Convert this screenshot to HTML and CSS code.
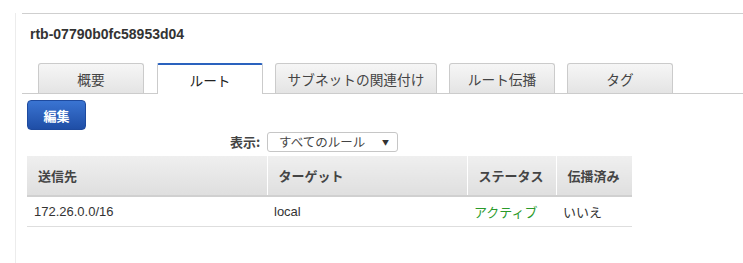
FILE: index.html
```html
<!DOCTYPE html>
<html lang="ja">
<head>
<meta charset="utf-8">
<link rel="stylesheet" href="styles.css">
</head>
<body>
<div class="page">
  <div class="panel">
    <div class="title">rtb-07790b0fc58953d04</div>
    <div class="tabs">
      <div class="tab">概要</div>
      <div class="tab active">ルート</div>
      <div class="tab wide">サブネットの関連付け</div>
      <div class="tab">ルート伝播</div>
      <div class="tab">タグ</div>
    </div>
    <div class="content">
      <button class="btn">編集</button>
      <div class="filter">
        <span class="label">表示:</span>
        <div class="select"><span>すべてのルール</span><span class="arrow">▼</span></div>
      </div>
      <table class="grid">
        <thead>
          <tr>
            <th class="c1">送信先</th>
            <th class="c2">ターゲット</th>
            <th class="c3">ステータス</th>
            <th class="c4">伝播済み</th>
          </tr>
        </thead>
        <tbody>
          <tr>
            <td>172.26.0.0/16</td>
            <td>local</td>
            <td class="ok">アクティブ</td>
            <td>いいえ</td>
          </tr>
        </tbody>
      </table>
    </div>
  </div>
</div>
</body>
</html>
```

FILE: styles.css
```css
html, body {
  margin: 0;
  padding: 0;
  background: #fff;
}
body {
  font-family: "Liberation Sans", Arial, "Noto Sans CJK JP", sans-serif;
  color: #333;
  font-size: 13px;
}
.page {
  margin-left: 15px;
  border-left: 1px solid #ececec;
  padding-left: 6px;
  min-height: 263px;
  box-sizing: border-box;
}
.panel {
  margin-top: 13px;
  border-top: 1px solid #cfcfcf;
}
.title {
  font-size: 14px;
  font-weight: bold;
  color: #333;
  padding: 12px 0 0 8px;
  height: 49px;
  line-height: 16px;
  box-sizing: border-box;
}
.tabs {
  display: flex;
  gap: 12px;
  padding-left: 16px;
  border-bottom: 1px solid #cccccc;
  height: 30px;
}
.tab {
  width: 106px;
  height: 30px;
  box-sizing: border-box;
  border: 1px solid #cbcbcb;
  border-bottom: none;
  border-radius: 3px 3px 0 0;
  background: linear-gradient(#f6f6f6, #e4e4e4);
  font-family: "Noto Sans CJK JP", sans-serif;
  font-size: 13.7px;
  color: #444;
  display: flex;
  align-items: center;
  justify-content: center;
  padding-top: 1px;
}
.tab.wide {
  width: 162px;
}
.tab.active {
  width: 106px;
  margin-left: 1px;
  background: #fff;
  border-top: 2px solid #2a62be;
  height: 31px;
  color: #222;
  border-radius: 2px 2px 0 0;
}
.content {
  padding-left: 5px;
  padding-top: 6px;
}
.btn {
  display: block;
  width: 59px;
  height: 30px;
  border: 1px solid #1e4a9e;
  border-radius: 4px;
  background: linear-gradient(#3a74d2, #1f4ea6);
  color: #fff;
  font-family: "Noto Sans CJK JP", sans-serif;
  font-weight: bold;
  font-size: 13px;
  padding: 0;
  margin: 0;
}
.filter {
  display: flex;
  align-items: center;
  margin-left: 203px;
  height: 21px;
  margin-top: 1px;
}
.label {
  font-family: "Noto Sans CJK JP", sans-serif;
  font-weight: bold;
  font-size: 13px;
  color: #444;
  width: 32px;
}
.select {
  margin-left: 5px;
  width: 131px;
  height: 20px;
  box-sizing: border-box;
  border: 1px solid #c6c6c6;
  border-radius: 3px;
  display: flex;
  align-items: center;
  justify-content: space-between;
  padding: 0 8px 0 11px;
  font-family: "Noto Sans CJK JP", sans-serif;
  font-size: 12.5px;
  color: #444;
}
.arrow {
  font-size: 7px;
  color: #333;
}
.grid {
  margin-top: 4px;
  border-collapse: collapse;
  width: 605px;
  table-layout: fixed;
}
.grid th {
  height: 40px;
  box-sizing: border-box;
  background: linear-gradient(#efefef, #dfdfdf);
  border-bottom: 2px solid #d0d0d0;
  border-left: 1px solid #fff;
  text-align: left;
  font-family: "Noto Sans CJK JP", sans-serif;
  font-size: 13px;
  font-weight: bold;
  color: #444;
  padding: 0 0 0 11px;
}
.grid th:first-child {
  border-left: none;
}
.grid th.c1 { width: 240px; }
.grid th.c2 { width: 200px; }
.grid th.c3 { width: 89px; }
.grid th.c4 { width: 76px; }
.grid td {
  height: 30px;
  box-sizing: border-box;
  border-bottom: 1px solid #dedede;
  padding: 0 0 0 7px;
  font-size: 13px;
  color: #333;
  font-family: "Liberation Sans", Arial, "Noto Sans CJK JP", sans-serif;
}
.grid td.ok {
  color: #2a9a2a;
}
```
